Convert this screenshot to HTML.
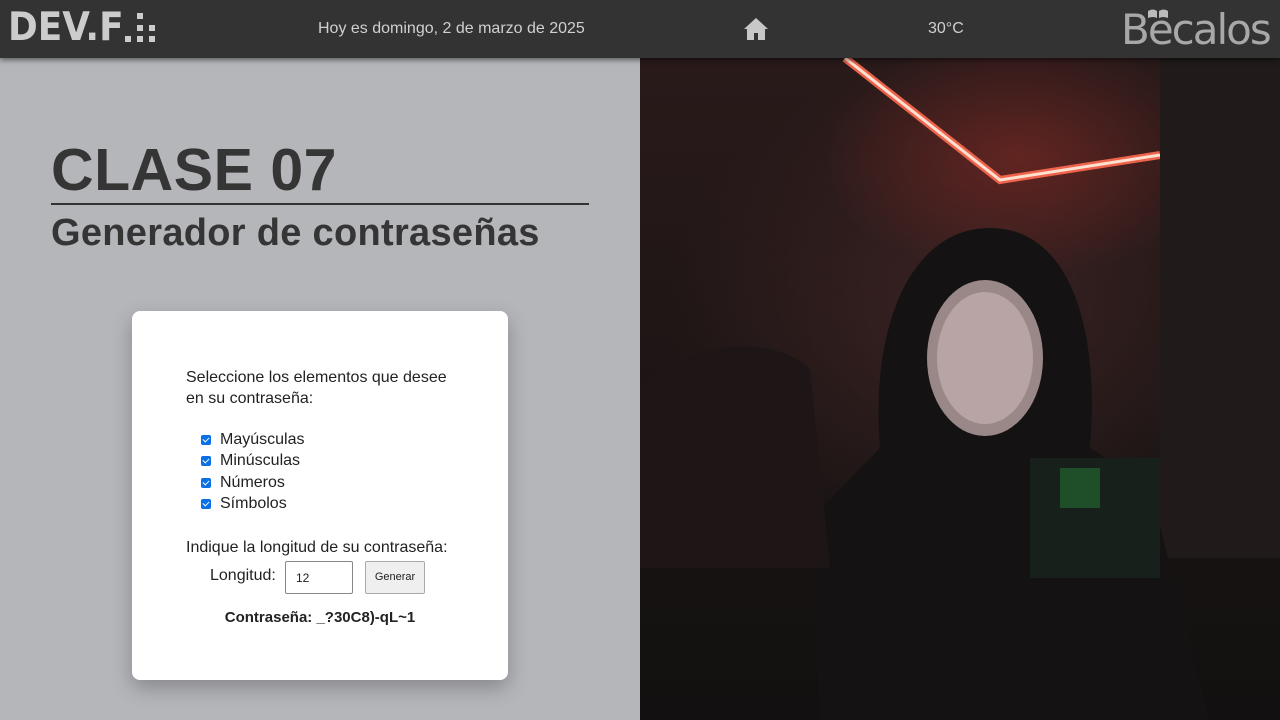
<!DOCTYPE html>
<html><head><meta charset="utf-8"><style>
*{margin:0;padding:0;box-sizing:border-box}
body{width:1280px;height:720px;overflow:hidden;font-family:"Liberation Sans",sans-serif;background:#b5b6ba;position:relative}
.hdr{position:absolute;left:0;top:0;width:1280px;height:58px;background:#333;box-shadow:0 2px 5px rgba(0,0,0,.5);z-index:5;color:#d0d0d0}
.logo{position:absolute;left:8px;top:10px;font-weight:bold;font-size:39px;letter-spacing:0px;color:#ccc;line-height:36px;font-family:"DejaVu Sans",sans-serif;transform:scaleX(.92);transform-origin:left}
.sq{position:absolute;background:#ccc;width:6px;height:6px}
.date{position:absolute;left:318px;top:20px;font-size:16px}
.temp{position:absolute;left:928px;top:20px;font-size:16px}
.bec{position:absolute;left:1121px;top:6px;font-size:42px;color:#a8a8a8;line-height:48px;font-family:"DejaVu Sans",sans-serif;letter-spacing:-2px}
h1{position:absolute;left:51px;top:136px;font-size:59px;font-weight:bold;color:#353535;letter-spacing:.5px}
.line{position:absolute;left:51px;top:203px;width:538px;height:2px;background:#333}
h2{position:absolute;left:51px;top:212px;font-size:38px;font-weight:bold;color:#353535;letter-spacing:.3px}
.card{position:absolute;left:132px;top:311px;width:376px;height:369px;background:#fff;border-radius:8px;box-shadow:0 8px 20px rgba(0,0,0,.25);color:#222;font-size:16px}
.t{position:absolute}
.cb{position:absolute;left:69px;width:10px;height:10px;background:#0b6fe6;border-radius:2px}
.cb:after{content:"";position:absolute;left:3px;top:1px;width:3px;height:5px;border:solid #fff;border-width:0 1.5px 1.5px 0;transform:rotate(45deg)}
.photo{position:absolute;left:640px;top:58px;width:640px;height:662px;overflow:hidden;background:
radial-gradient(ellipse 200px 120px at 380px 100px,rgba(120,40,35,.7),transparent),
radial-gradient(ellipse 300px 250px at 330px 250px,#3a2222,transparent),
linear-gradient(#2a1a1a,#1a1414 60%,#121010)}
</style></head><body>
<div class="hdr">
<div class="logo">DEV.F</div>
<div class="sq" style="left:137px;top:13px"></div>
<div class="sq" style="left:137px;top:25px"></div><div class="sq" style="left:149px;top:25px"></div>
<div class="sq" style="left:125px;top:36px"></div><div class="sq" style="left:137px;top:36px"></div><div class="sq" style="left:149px;top:36px"></div>
<div class="date">Hoy es domingo, 2 de marzo de 2025</div>
<svg style="position:absolute;left:743px;top:17px" width="26" height="24" viewBox="0 0 26 24"><path d="M13 1L1 12h3v11h7v-7h4v7h7V12h3z" fill="#c8c8c8"/></svg>
<div class="temp">30°C</div>
<div class="bec">Becalos</div>
<svg style="position:absolute;left:1147px;top:8px" width="22" height="10" viewBox="0 0 22 10"><path d="M1 3q5-3 9 0v7q-4-2-9 0zM12 3q5-3 9 0v7q-5-2-9 0z" fill="#bbb"/></svg>
</div>
<h1>CLASE 07</h1><div class="line"></div><h2>Generador de contraseñas</h2>
<div class="card">
<div class="t" style="left:54px;top:56px;line-height:21px">Seleccione los elementos que desee<br>en su contraseña:</div>
<div class="cb" style="top:124px"></div><div class="t" style="left:88px;top:120px">Mayúsculas</div>
<div class="cb" style="top:145px"></div><div class="t" style="left:88px;top:141px">Minúsculas</div>
<div class="cb" style="top:167px"></div><div class="t" style="left:88px;top:163px">Números</div>
<div class="cb" style="top:188px"></div><div class="t" style="left:88px;top:184px">Símbolos</div>
<div class="t" style="left:54px;top:228px">Indique la longitud de su contraseña:</div>
<div class="t" style="left:78px;top:256px">Longitud:</div>
<div class="t" style="left:153px;top:250px;width:68px;height:33px;border:1px solid #888;border-radius:2px;font-size:12px;padding:9px 10px">12</div>
<div class="t" style="left:233px;top:250px;width:60px;height:33px;border:1px solid #aaa;border-radius:2px;background:#efefef;font-size:11px;text-align:center;line-height:31px">Generar</div>
<div class="t" style="left:0;width:376px;text-align:center;top:298px;font-weight:bold;font-size:15px">Contraseña: _?30C8)-qL~1</div>
</div>
<div class="photo">
<svg width="640" height="662" style="position:absolute;left:0;top:0">
<path d="M205 0L360 122L520 97" stroke="#ff6a50" stroke-width="8" fill="none" opacity=".9"/>
<path d="M205 0L360 122L520 97" stroke="#ffe0d0" stroke-width="3" fill="none"/>
<rect x="520" y="0" width="120" height="500" fill="#201a1a"/>
<path d="M240 390c-10-120 30-220 110-220s110 100 100 220l60 40 60 232H180l-10-200z" fill="#141212"/>
<ellipse cx="345" cy="300" rx="58" ry="78" fill="#9a8888"/>
<ellipse cx="345" cy="300" rx="48" ry="66" fill="#b8a4a4"/>
<rect x="390" y="400" width="130" height="120" fill="#17201a"/>
<rect x="420" y="410" width="40" height="40" fill="#2a8a3a" opacity=".45"/>
<path d="M0 330c40-40 120-60 170-20l20 200H0z" fill="#1e1616"/>
</svg>
</div>
</body></html>
